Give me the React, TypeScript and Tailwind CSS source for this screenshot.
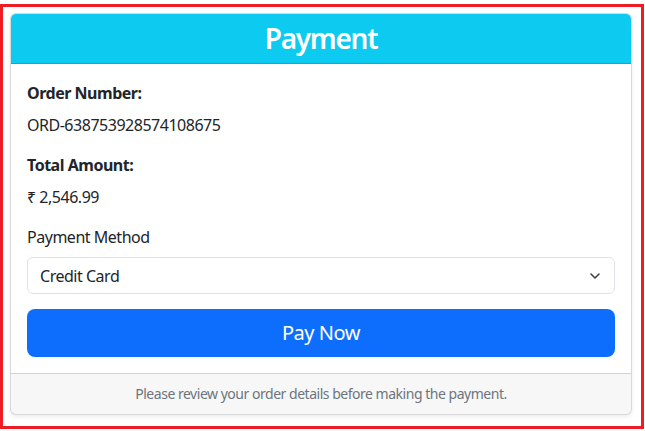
import { ChevronDown } from 'lucide-react';

const order = {
  number: 'ORD-638753928574108675',
  total: '₹ 2,546.99',
};

export default function App() {
  return (
    <div className="w-[645px] h-[431px] bg-white pt-1 font-['Noto_Sans',sans-serif] tracking-[-0.03em] text-[#212529]">
      <div className="w-[644px] h-[425px] border-[3px] border-[#ee1c25] pl-[7px] pt-[6px]">
        <div className="w-[622px] overflow-hidden rounded-md border border-black/15 bg-white shadow-[0_2px_4px_rgba(0,0,0,0.075)]">
          {/* header */}
          <div className="bg-[#0dcaf0] border-b border-black/15 px-4 py-2 text-center">
            <h3 className="text-[28px] leading-[33px] font-semibold tracking-[-0.045em] text-white">Payment</h3>
          </div>

          <div className="p-4 text-base leading-6">
            <p className="mb-2 pt-px font-bold">Order Number:</p>
            <p className="mb-4">{order.number}</p>
            <p className="mb-2 font-bold">Total Amount:</p>
            <p className="mb-4">{order.total}</p>

            <label className="mb-2 block">Payment Method</label>
            <div className="relative mb-4">
              <div className="flex h-[37px] items-center rounded-md border border-[#dee2e6] bg-white pl-3 pr-9">
                Credit Card
              </div>
              <ChevronDown
                className="absolute right-3 top-1/2 h-4 w-4 -translate-y-1/2 text-[#343a40]"
                strokeWidth={2.25}
              />
            </div>

            <button className="-mt-px flex h-12 w-full items-center justify-center rounded-lg bg-[#0d6efd] text-xl text-white">
              Pay Now
            </button>
          </div>

          {/* footer */}
          <div className="border-t border-black/15 bg-black/[0.03] px-4 py-2 text-center text-sm leading-6 text-[#6c757d]">
            Please review your order details before making the payment.
          </div>
        </div>
      </div>
    </div>
  );
}
